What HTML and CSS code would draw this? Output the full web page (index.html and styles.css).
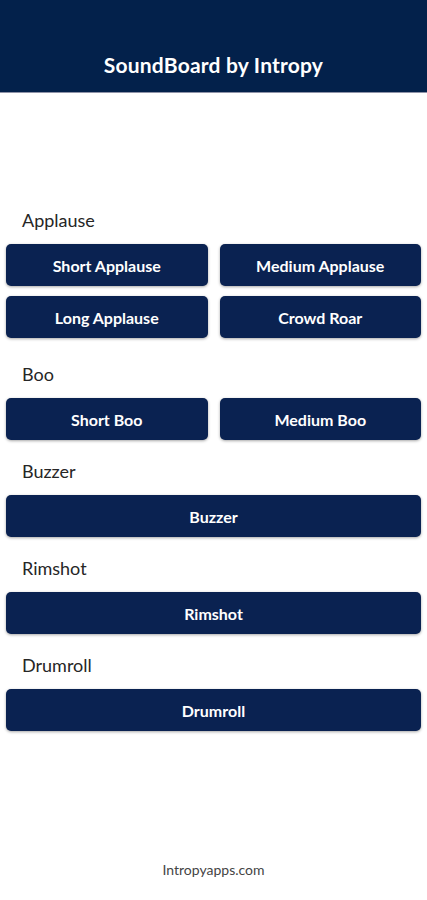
FILE: index.html
```html
<!DOCTYPE html>
<html lang="en">
<head>
    <meta charset="UTF-8">
    <meta name="viewport" content="width=device-width, initial-scale=1.0">
    <title>SoundBoard by Intropy</title>
    <link rel="stylesheet" href="styles.css">
</head>
<body>
    <header class="app-bar">
        <h1>SoundBoard by Intropy</h1>
    </header>

    <main class="board">
        <section class="group">
            <h2>Applause</h2>
            <div class="buttons two">
                <button>Short Applause</button>
                <button>Medium Applause</button>
                <button>Long Applause</button>
                <button>Crowd Roar</button>
            </div>
        </section>

        <section class="group">
            <h2>Boo</h2>
            <div class="buttons two">
                <button>Short Boo</button>
                <button>Medium Boo</button>
            </div>
        </section>

        <section class="group">
            <h2>Buzzer</h2>
            <div class="buttons">
                <button>Buzzer</button>
            </div>
        </section>

        <section class="group">
            <h2>Rimshot</h2>
            <div class="buttons">
                <button>Rimshot</button>
            </div>
        </section>

        <section class="group">
            <h2>Drumroll</h2>
            <div class="buttons">
                <button>Drumroll</button>
            </div>
        </section>
    </main>

    <footer class="footer">Intropyapps.com</footer>
</body>
</html>
```

FILE: styles.css
```css
* {
    margin: 0;
    padding: 0;
    box-sizing: border-box;
    font-family: Lato, 'Open Sans', sans-serif;
}

body {
    background-color: #ffffff;
    color: #222222;
    min-height: 900px;
    display: flex;
    flex-direction: column;
}

.app-bar {
    background-color: #03214b;
    height: 93px;
    display: flex;
    align-items: flex-end;
    justify-content: center;
    padding-bottom: 15px;
    border-bottom: 1px solid #8f93a8;
}

.app-bar h1 {
    color: #ffffff;
    font-size: 21px;
    font-weight: 700;
    letter-spacing: 0.2px;
}

.board {
    padding: 0 6px;
    padding-top: 115px;
}

.group h2 {
    font-size: 18px;
    font-weight: 400;
    color: #262626;
    line-height: 24px;
    padding-left: 16px;
    margin-bottom: 12px;
}

.group + .group {
    margin-top: 24px;
}

.group:nth-child(n+3) {
    margin-top: 19px;
}

.buttons {
    display: grid;
    grid-template-columns: 1fr;
    gap: 10px 12px;
}

.buttons.two {
    grid-template-columns: 1fr 1fr;
}

.buttons button {
    height: 42px;
    border: none;
    border-radius: 5px;
    background-color: #0a2251;
    color: #ffffff;
    font-size: 16px;
    font-weight: 700;
    box-shadow: 0 1px 3px rgba(0, 0, 0, 0.35);
    cursor: pointer;
}

.footer {
    margin-top: auto;
    text-align: center;
    font-size: 14px;
    color: #444444;
    padding-bottom: 22px;
}
```
